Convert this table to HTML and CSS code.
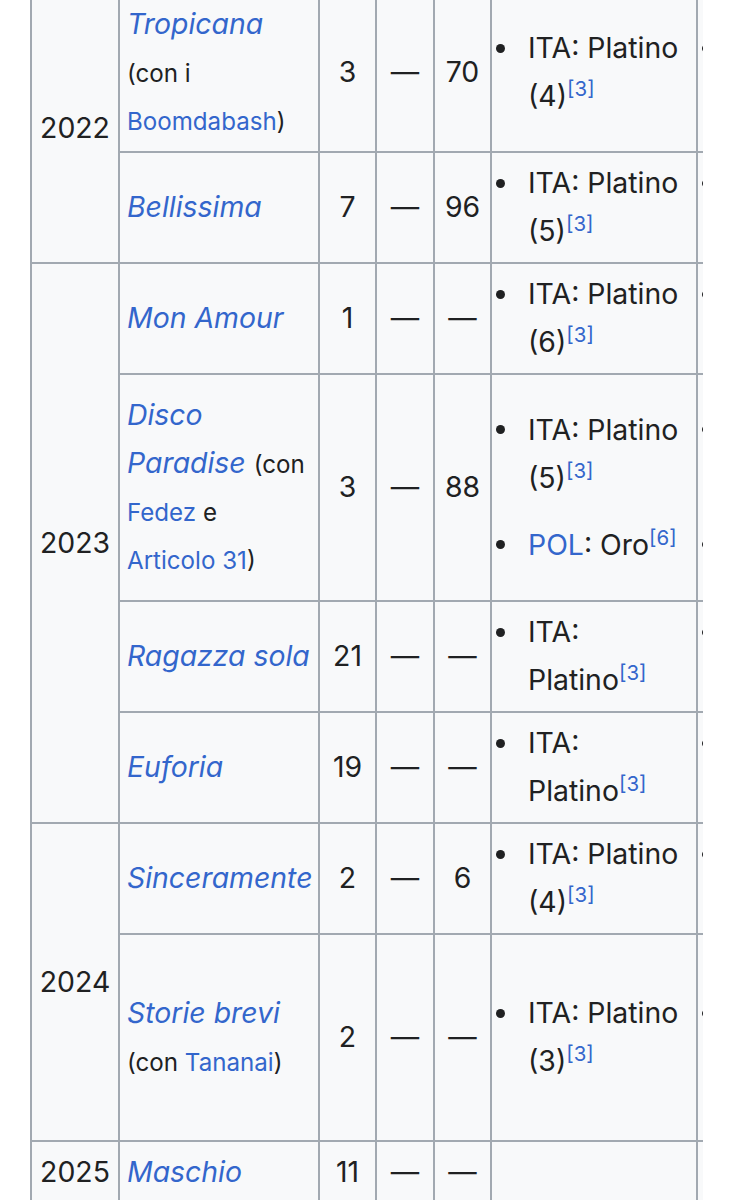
FILE: index.html
```html
<!DOCTYPE html>
<html lang="it">
<head>
<meta charset="utf-8">
<title>Singoli</title>
<link rel="stylesheet" href="styles.css">
</head>
<body>
<div class="viewport">
<table class="wikitable">
<colgroup>
<col class="c-year"><col class="c-title"><col class="c-pos"><col class="c-pos2"><col class="c-pos"><col class="c-cert"><col class="c-cert">
</colgroup>
<tbody>
<tr>
<td rowspan="2" class="year">2022</td>
<td class="title"><a href="#"><i>Tropicana</i></a> <small>(con i <a href="#">Boomdabash</a>)</small></td>
<td class="pos">3</td><td class="pos">—</td><td class="pos">70</td>
<td class="cert"><ul><li><span>ITA: Platino (4)<sup class="ref"><a href="#">[3]</a></sup></span></li></ul></td>
<td class="cert"><ul><li><span>ITA: Platino (4)<sup class="ref"><a href="#">[3]</a></sup></span></li></ul></td>
</tr>
<tr>
<td class="title"><a href="#"><i>Bellissima</i></a></td>
<td class="pos">7</td><td class="pos">—</td><td class="pos">96</td>
<td class="cert"><ul><li><span>ITA: Platino (5)<sup class="ref"><a href="#">[3]</a></sup></span></li></ul></td>
<td class="cert"><ul><li><span>ITA: Platino (5)<sup class="ref"><a href="#">[3]</a></sup></span></li></ul></td>
</tr>
<tr>
<td rowspan="4" class="year">2023</td>
<td class="title"><a href="#"><i>Mon Amour</i></a></td>
<td class="pos">1</td><td class="pos">—</td><td class="pos">—</td>
<td class="cert"><ul><li><span>ITA: Platino (6)<sup class="ref"><a href="#">[3]</a></sup></span></li></ul></td>
<td class="cert"><ul><li><span>ITA: Platino (6)<sup class="ref"><a href="#">[3]</a></sup></span></li></ul></td>
</tr>
<tr class="row-disco">
<td class="title"><a href="#"><i>Disco Paradise</i></a> <small>(con <a href="#">Fedez</a> e <a href="#" class="nowrap">Articolo 31</a>)</small></td>
<td class="pos">3</td><td class="pos">—</td><td class="pos">88</td>
<td class="cert"><ul><li><span>ITA: Platino (5)<sup class="ref"><a href="#">[3]</a></sup></span></li><li><span><a href="#">POL</a>: Oro<sup class="ref"><a href="#">[6]</a></sup></span></li></ul></td>
<td class="cert"><ul><li><span>ITA: Platino (5)<sup class="ref"><a href="#">[3]</a></sup></span></li><li><span><a href="#">POL</a>: Oro<sup class="ref"><a href="#">[6]</a></sup></span></li></ul></td>
</tr>
<tr>
<td class="title"><a href="#"><i>Ragazza sola</i></a></td>
<td class="pos">21</td><td class="pos">—</td><td class="pos">—</td>
<td class="cert"><ul><li><span>ITA: Platino<sup class="ref"><a href="#">[3]</a></sup></span></li></ul></td>
<td class="cert"><ul><li><span>ITA: Platino<sup class="ref"><a href="#">[3]</a></sup></span></li></ul></td>
</tr>
<tr>
<td class="title"><a href="#"><i>Euforia</i></a></td>
<td class="pos">19</td><td class="pos">—</td><td class="pos">—</td>
<td class="cert"><ul><li><span>ITA: Platino<sup class="ref"><a href="#">[3]</a></sup></span></li></ul></td>
<td class="cert"><ul><li><span>ITA: Platino<sup class="ref"><a href="#">[3]</a></sup></span></li></ul></td>
</tr>
<tr>
<td rowspan="2" class="year">2024</td>
<td class="title"><a href="#"><i>Sinceramente</i></a></td>
<td class="pos">2</td><td class="pos">—</td><td class="pos">6</td>
<td class="cert"><ul><li><span>ITA: Platino (4)<sup class="ref"><a href="#">[3]</a></sup></span></li></ul></td>
<td class="cert"><ul><li><span>ITA: Platino (4)<sup class="ref"><a href="#">[3]</a></sup></span></li></ul></td>
</tr>
<tr class="row-storie">
<td class="title"><a href="#"><i>Storie brevi</i></a> <small>(con <a href="#">Tananai</a>)</small></td>
<td class="pos">2</td><td class="pos">—</td><td class="pos">—</td>
<td class="cert"><ul><li><span>ITA: Platino (3)<sup class="ref"><a href="#">[3]</a></sup></span></li></ul></td>
<td class="cert"><ul><li><span>ITA: Platino (3)<sup class="ref"><a href="#">[3]</a></sup></span></li></ul></td>
</tr>
<tr>
<td class="year">2025</td>
<td class="title"><a href="#"><i>Maschio</i></a></td>
<td class="pos">11</td><td class="pos">—</td><td class="pos">—</td>
<td class="cert"></td>
<td class="cert"></td>
</tr>
</tbody>
</table>
</div>
</body>
</html>
```

FILE: styles.css
```css
html, body {
  margin: 0;
  padding: 0;
  background: #ffffff;
}

body {
  font-family: Inter, "Liberation Sans", "DejaVu Sans", sans-serif;
  color: #202122;
}

.viewport {
  box-sizing: border-box;
  width: 703px;
  height: 1200px;
  padding-left: 30px;
  overflow: hidden;
}

.wikitable {
  margin-top: -8px;
  border-collapse: collapse;
  table-layout: fixed;
  width: 873px;
  background: #f8f9fa;
  font-size: 28.4px;
  line-height: 48px;
}

.c-year { width: 88px; }
.c-title { width: 200px; }
.c-pos { width: 57px; }
.c-pos2 { width: 58px; }
.c-cert { width: 206px; }

.wikitable td {
  border: 2px solid #a2a9b1;
  padding: 6px 8px 7px;
  vertical-align: middle;
}

.year,
.pos {
  text-align: center;
}

.wikitable td.year {
  padding-left: 4px;
  padding-right: 4px;
}

.wikitable td.title {
  text-align: left;
  padding-left: 7px;
  padding-right: 4px;
}

a {
  color: #3366cc;
  text-decoration: none;
}

.nowrap {
  white-space: nowrap;
}

small {
  font-size: 85%;
  line-height: 1;
}

.ref {
  font-size: 72%;
  line-height: 1;
  vertical-align: super;
  font-style: normal;
}

.cert ul {
  margin: 0;
  padding: 0;
  list-style: none;
}

.cert li {
  display: flex;
  align-items: flex-start;
}

.cert li::before {
  content: "";
  flex: none;
  width: 9px;
  height: 9px;
  border-radius: 50%;
  background: #202122;
  margin: 19.5px 23.5px 0 -4.5px;
}

.cert li + li {
  margin-top: 19px;
}

.row-disco {
  height: 227px;
}

.row-storie {
  height: 207px;
}
```
